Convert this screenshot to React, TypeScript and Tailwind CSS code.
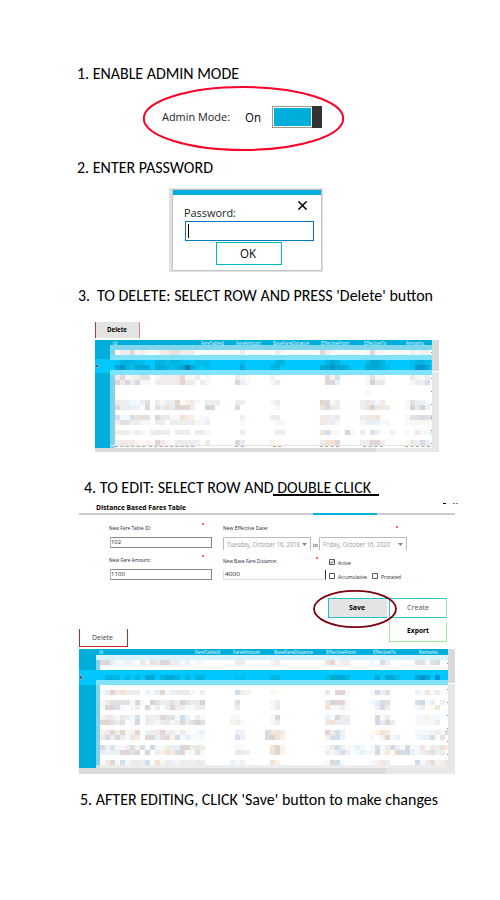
import { useLayoutEffect, useRef, useState } from "react";

/** One line of text stretched or squeezed to the width of its box. */
function Fit({ className, children }: { className: string; children: string }) {
  const outer = useRef<HTMLSpanElement>(null);
  const inner = useRef<HTMLSpanElement>(null);
  const [scale, setScale] = useState(1);
  useLayoutEffect(() => {
    if (outer.current && inner.current) {
      setScale(outer.current.clientWidth / inner.current.getBoundingClientRect().width);
    }
  }, []);
  return (
    <span ref={outer} className={`block shrink-0 whitespace-nowrap ${className}`}>
      <span ref={inner} className="inline-block origin-left" style={{ transform: `scaleX(${scale})` }}>
        {children}
      </span>
    </span>
  );
}

const heading = "h-5 text-[16px] leading-[22px] font-['Carlito','Lato',sans-serif]";

const palette: Record<string, string> = {
  a: "#f7f7f7", b: "#ededee", c: "#e1e1e1", d: "#d4d5d6",
  p: "#f3e9e6", P: "#e2d5d4", o: "#fcf1e6", O: "#f4e2d3",
  u: "#eaf0f8", U: "#d1dfec", v: "#edebf2", V: "#d8d7e2",
  g: "#f3fbf2", t: "#f0faff", n: "#ece9e2", y: "#fffaf0",
  "1": "#00bdec", "2": "#00b4e0", "3": "#00a8d6", "4": "#0095d0", "5": "#0078aa", "6": "#00b0c0",
};

type Segment = [number, string];

/** A strip of 5px blurred-out cells; each segment starts at a column index. */
function Strip({ segments, className = "" }: { segments: Segment[]; className?: string }) {
  const cells: string[] = Array(70).fill(".");
  segments.forEach(([start, s]) => s.split("").forEach((c, i) => (cells[start + i] = c)));
  return (
    <div className={`flex h-[5px] w-full shrink-0 overflow-hidden ${className}`}>
      {cells.map((c, i) => (
        <i key={i} className="h-full w-[5px] shrink-0" style={{ backgroundColor: palette[c] }} />
      ))}
    </div>
  );
}

function Marks({ className }: { className: string }) {
  return (
    <div className={`flex flex-col ${className}`}>
      {[0, 1, 2, 3, 4, 5, 6, 7].map((i) => (
        <i key={i} className="mb-[12px] h-px w-px bg-[#8c8c9c]" />
      ))}
    </div>
  );
}

const th = "h-[5px] text-[5px] leading-[7px] text-[#e8fbff]";

function FirstTable() {
  return (
    <div className="relative ml-[95px] h-[112px] w-[344px] overflow-hidden bg-white">
      <div className="flex h-[108px]">
        <div className="flex w-[15px] flex-col bg-[#00aedb]">
          <div className="mt-[19px] flex h-[14px] items-center bg-[#00c8ff] pl-px">
            <svg className="h-[4px] w-[3px]" viewBox="0 0 3 4"><path d="M0 0L3 2L0 4Z" fill="#334" stroke="#dff" strokeWidth=".4" /></svg>
          </div>
        </div>
        <div className="relative w-[322px] overflow-hidden">
          <div className="absolute inset-y-0 left-0 w-[5px] bg-[#80d3eb]" />
          <div className="relative flex h-[108px] flex-col">
            <div className="flex h-[5px] shrink-0 overflow-hidden bg-[#00aedb]">
              <Fit className={`${th} ml-[3px] w-[4px]`}>Id</Fit>
              <Fit className={`${th} ml-[84px] w-[23px]`}>FareTableId</Fit>
              <Fit className={`${th} ml-[12px] w-[25px]`}>FareAmount</Fit>
              <Fit className={`${th} ml-[12px] w-[36px]`}>BaseFareDistance</Fit>
              <Fit className={`${th} ml-[12px] w-[28px]`}>EffectiveFrom</Fit>
              <Fit className={`${th} ml-[15px] w-[22px]`}>EffectiveTo</Fit>
              <Fit className={`${th} ml-[20px] w-[18px]`}>Remarks</Fit>
            </div>
            <div className="h-[5px] shrink-0 bg-[#80d7eb]" />
            <Strip segments={[[2, "bpPaba.appccbpb"], [26, "b"], [33, "ba"], [42, "Pba"], [51, "aPaa"], [60, "babb"]]} />
            <div className="h-[5px] shrink-0 bg-[#80e3f8]" />
            <Strip className="bg-[#00c8ff]" segments={[[2, "22211..2212211.111"], [26, "1"], [33, "22"], [43, "232"], [51, "1332"], [60, "1221"]]} />
            <Strip className="bg-[#00c8ff]" segments={[[1, "3421333.332123531.1"], [26, "3"], [32, "22"], [42, "334332"], [51, "33321"], [60, "1443"]]} />
            <div className="h-[5px] shrink-0 bg-[#80e4ff]" />
            <Strip segments={[[1, "bPaobcc.appvpPaab.a"], [25, "bay"], [32, "o"], [43, "VoU"], [51, "acaa"], [60, "nggb"]]} />
            <Strip segments={[[1, "PbVbVat.bbpbpPpb.ba"], [25, "Vua"], [32, "ab"], [43, "PVu"], [51, "tdnn"], [60, "abuU"]]} />
            <Strip segments={[]} />
            <Strip segments={[[51, "a"]]} />
            <Strip segments={[]} />
            <Strip segments={[[1, "pbuttbc.baubPyopa.bbb"], [25, "bb"], [32, "ab"], [42, "PVgb"], [50, "bnbtp"], [59, "gcuut"]]} />
            <Strip segments={[[1, "Vbvuu.P.cuOvPPPb..dP"], [25, "U"], [33, "a"], [42, "OVnb"], [50, "uOdnnp"], [59, "gdndu"]]} />
            <Strip segments={[]} />
            <Strip segments={[[1, "UttUOcc.VnnatOpo.ta"], [26, "u"], [32, "pp"], [42, "ppun"], [50, "pppO"], [59, "gccUcP"]]} />
            <Strip segments={[[1, "bccbbaa.bb.bbbbbaab"], [26, "a"], [33, "aa"], [42, "nbba"], [50, "abuuta"], [59, "gaaaa"]]} />
            <Strip segments={[]} />
            <Strip segments={[[1, "bpbaba.pnbb.bbb.pva"], [26, "b"], [33, "bb"], [42, "OUay.dt"], [50, "v.cu..u"], [59, "g.ngtb"]]} />
            <Strip segments={[]} />
            <Strip segments={[[1, "upppayo.Ppa.pbbvu.p"], [25, "Vv"], [32, "oy"], [42, "vOOP"], [50, "bpVPp"], [59, "gnuVu"]]} />
            <div className="h-px shrink-0 bg-[#e4e4e0]" />
            <div className="flex h-[2px] shrink-0 items-start pl-[5px]">
              <i className="h-px w-[30px] border-t border-dashed border-[#aaa]" />
              <i className="ml-[4px] h-px w-[45px] border-t border-dashed border-[#aaa]" />
              <i className="ml-[41px] h-px w-[9px] border-t border-dashed border-[#aaa]" />
              <i className="ml-[29px] h-px w-[8px] border-t border-dashed border-[#aaa]" />
              <i className="ml-[39px] h-px w-[19px] border-t border-dashed border-[#aaa]" />
              <i className="ml-[24px] h-px w-[20px] border-t border-dashed border-[#aaa]" />
              <i className="ml-[22px] h-px w-[25px] border-t border-dashed border-[#aaa]" />
            </div>
          </div>
          <Marks className="absolute right-0 top-[12px]" />
        </div>
        <div className="flex w-[7px] flex-col bg-[#e8e8e8]">
          <div className="h-[32px] border-b border-white bg-[#dadada]" />
        </div>
      </div>
      <div className="flex h-[4px] bg-[#e8e8e8]"><div className="w-[281px] bg-[#dadada]" /></div>
    </div>
  );
}

function SecondTable() {
  return (
    <div className="relative ml-[79px] h-[125px] w-[376px] overflow-hidden bg-white">
      <div className="flex h-[119px]">
        <div className="flex w-[17px] flex-col bg-[#00aedb]">
          <div className="mt-[21px] flex h-[15px] items-center bg-[#00c8ff] pl-px">
            <svg className="h-[5px] w-[3px]" viewBox="0 0 3 5"><path d="M0 0L3 2.5L0 5Z" fill="#334" stroke="#dff" strokeWidth=".4" /></svg>
          </div>
        </div>
        <div className="relative w-[352px] overflow-hidden">
          <div className="absolute inset-y-0 left-0 w-[4px] bg-[#80d3eb]" />
          <div className="relative flex h-[119px] flex-col">
            <div className="flex h-[6px] shrink-0 overflow-hidden bg-[#00aedb]">
              <Fit className={`${th} ml-[3px] w-[4px]`}>Id</Fit>
              <Fit className={`${th} ml-[92px] w-[25px]`}>FareTableId</Fit>
              <Fit className={`${th} ml-[13px] w-[27px]`}>FareAmount</Fit>
              <Fit className={`${th} ml-[14px] w-[39px]`}>BaseFareDistance</Fit>
              <Fit className={`${th} ml-[13px] w-[30px]`}>EffectiveFrom</Fit>
              <Fit className={`${th} ml-[17px] w-[23px]`}>EffectiveTo</Fit>
              <Fit className={`${th} ml-[23px] w-[19px]`}>Remarks</Fit>
            </div>
            <div className="h-[5px] shrink-0 bg-[#d9f3fa]" />
            <Strip className="pl-[4px]" segments={[[0, "PVbtaut.nacnVPbvtu.at"], [27, "pp"], [34, "ab"], [45, "OPabb"], [54, "t.Uu"], [63, "cctcU"]]} />
            <Strip segments={[]} />
            <Strip className="bg-[#00c8ff]" segments={[]} />
            <Strip className="bg-[#00c8ff] pl-[4px]" segments={[[1, "222.2.2.33.2332.2.22"], [27, "11"], [34, "22"], [45, "16332"], [55, "3.331"], [63, "343.4"]]} />
            <div className="h-[5px] shrink-0 bg-[#80e3f9]" />
            <Strip segments={[]} />
            <Strip className="pl-[4px]" segments={[[0, "tbPpObub.utvPauvnba.b"], [27, "Ubo"], [34, "ay"], [45, "n.PPa"], [54, "tVuc"], [63, "utnyb"]]} />
            <Strip segments={[]} />
            <Strip className="pl-[4px]" segments={[[0, "apcccctPa.dcbbcbdcbnd"], [27, "c"], [34, "tb"], [45, "ndPPa"], [54, "tbUc"], [63, "Udtb.u"]]} />
            <Strip className="pl-[4px]" segments={[[0, "tPVct.tb.Vgb.uPpbatvb"], [27, "b"], [34, "av"], [45, "Oaaug"], [55, "uVb"], [63, "tuyyn"]]} />
            <Strip segments={[]} />
            <Strip className="pl-[4px]" segments={[[0, "opbtnugU.bubPcctUu.pa"], [26, "at"], [34, "tP"], [45, "utPvv"], [55, "Vyv"], [63, "taott"]]} />
            <Strip className="pl-[4px]" segments={[[0, "PPcpc.tV.puapnauPbcdc"], [26, "obt"], [34, "av"], [45, "nOvvv"], [55, "VvVb"], [63, "taaab"]]} />
            <Strip segments={[]} />
            <Strip className="pl-[4px]" segments={[[0, "ovPbPaoP.ubpPbbtpa.tu"], [27, "uu"], [33, "UOOp"], [45, "PpUu"], [54, "yoOp"], [63, "tttouaP"]]} />
            <Strip className="pl-[4px]" segments={[[0, "pVbVbtOb.PVucPoUtvtyt"], [27, "Uu"], [33, "VdOo"], [45, "oUUu"], [54, "a.oPtu"], [63, "tubUyc"]]} />
            <Strip segments={[]} />
            <Strip className="pl-[4px]" segments={[[0, "VucttpUoU.VtgbbuVPbnp"], [27, "ty"], [34, "OPo"], [45, "tpUuytut"], [54, "aUtpVugVt"], [63, "tngpuOp"]]} />
            <Strip className="pl-[4px]" segments={[[0, "uuuuPPcP.d.boOpUPytcg"], [27, "nbu"], [34, "OPo"], [45, "btbUv.tut"], [54, "aVapyPUVut"], [63, "tbncub"]]} />
            <Strip segments={[]} />
            <Strip className="pl-[4px]" segments={[[0, "apPtUtpnbUgOapuabbunb"], [26, "utu"], [34, "Oo"], [45, "tPUt"], [54, "tonb"], [63, "UtpcouO"]]} />
            <div className="h-[3px] shrink-0 bg-[#e8e8e8]/80" />
          </div>
          <Marks className="absolute right-0 top-[14px]" />
        </div>
        <div className="w-[7px] bg-[#e8e8e8]"><div className="h-[35px] border-b border-white bg-[#dadada]" /></div>
      </div>
      <div className="flex h-[6px] bg-[#e8e8e8]"><div className="w-[307px] bg-[#dadada]" /></div>
    </div>
  );
}

const small = "h-[8px] text-[5.6px] leading-[10px] text-[#222233]";
const value = "h-[8px] text-[6px] leading-[9px] text-[#222]";
const star = "size-[2px] rounded-full bg-[#ff3030]";

function Arrow() {
  return <svg className="mt-[5px] h-[3px] w-[5px]" viewBox="0 0 5 3"><path d="M0 0H5L2.5 3Z" fill="#888" /></svg>;
}

function Check({ checked, label, width }: { checked?: boolean; label: string; width: string }) {
  return (
    <div className="flex">
      <svg className="mt-px h-[6px] w-[6px] shrink-0" viewBox="0 0 6 6" fill="none" stroke="#333" strokeWidth=".8">
        <path d="M.5 .5H5.5V5.5H.5Z" />
        {checked && <path d="M1.3 3L2.6 4.3L5 1.5" />}
      </svg>
      <Fit className={`${small} ml-[3px] ${width}`}>{label}</Fit>
    </div>
  );
}

export default function App() {
  return (
    <main className="flex h-[900px] w-[500px] flex-col overflow-hidden bg-white pt-[63px] font-['Open_Sans',sans-serif] text-black">
      <h2><Fit className={`${heading} ml-[77px] w-[162px]`}>1. ENABLE ADMIN MODE</Fit></h2>

      <section className="relative flex h-[74px] shrink-0 pl-[162px]">
        <Fit className="mt-[24px] h-5 w-[68px] text-[11.4px] leading-5 text-[#222]">Admin Mode:</Fit>
        <Fit className="ml-[15px] mt-[25px] h-5 w-[16px] text-[12px] leading-5">On</Fit>
        <div className="ml-[11px] mt-[23px] flex h-[22px] w-[50px]">
          <div className="w-[40px] border border-r-0 border-[#999] p-px"><div className="h-full bg-[#00aedb]" /></div>
          <div className="w-[10px] bg-[#333]" />
        </div>
        <svg className="absolute left-[142px] top-[2px] h-[67px] w-[203px]" viewBox="0 0 203 67" fill="none">
          <ellipse cx="101.5" cy="33.5" rx="99.7" ry="31.5" stroke="#fb0026" strokeWidth="2" />
        </svg>
      </section>

      <h2><Fit className={`${heading} ml-[77px] w-[136px]`}>2. ENTER PASSWORD</Fit></h2>

      <section className="ml-[169px] mt-[11px] h-[84px] w-[154px] shrink-0 bg-[#e0e0e0] pb-px pl-[3px] pr-px pt-px">
        <div className="h-[82px] border border-[#c4c4c4] bg-white">
          <div className="h-[5px] bg-[#00aedb]" />
          <div className="flex h-[26px]">
            <Fit className="ml-[11px] mt-[8px] h-5 w-[52px] text-[11px] leading-5 text-[#222]">Password:</Fit>
            <svg className="ml-[62px] mt-[6px] h-[9px] w-[9px]" viewBox="0 0 9 9" stroke="#000" strokeWidth="1.5"><path d="M.4 .4L8.6 8.6M8.6 .4L.4 8.6" /></svg>
          </div>
          <div className="ml-[12px] h-[20px] w-[129px] border border-[#0078c8] pl-[2px] pt-[2px]"><div className="h-[14px] w-px bg-black" /></div>
          <div className="ml-[43px] mt-px flex h-[23px] w-[66px] border border-[#00bdbd] pl-[23px]">
            <Fit className="h-[21px] w-[16px] text-[12px] leading-[22px]">OK</Fit>
          </div>
        </div>
      </section>

      <h2 className="mt-[13px] flex">
        <Fit className={`${heading} ml-[78px] w-[12px]`}>3.</Fit>
        <Fit className={`${heading} ml-[7px] w-[336px]`}>TO DELETE: SELECT ROW AND PRESS 'Delete' button</Fit>
      </h2>

      <div className="ml-[95px] mt-[17px] flex h-[16px] w-[45px] shrink-0 border-l border-r border-l-[#cc3030] border-r-[#df8080] bg-[#e4e4e4] pl-[11px]">
        <Fit className="h-[16px] w-[20px] text-[6.4px] font-bold leading-[16px]">Delete</Fit>
      </div>
      <div className="mt-[2px] shrink-0"><FirstTable /></div>

      <h2 className="relative mt-[25px] flex">
        <Fit className={`${heading} ml-[84px] w-[287px]`}>4. TO EDIT: SELECT ROW AND DOUBLE CLICK</Fit>
        <i className="absolute left-[273px] top-[17px] h-[2px] w-[106px] bg-black" />
      </h2>

      <div className="ml-[79px] flex h-[16px] w-[385px] shrink-0">
        <Fit className="ml-[17px] mt-[5px] h-[10px] w-[90px] text-[7.2px] font-bold leading-[10px]">Distance Based Fares Table</Fit>
        <i className="ml-[257px] mt-[6px] h-px w-[3px] bg-black" />
        <i className="ml-[7px] mt-[6px] h-px w-[2px] bg-[#777]" />
        <i className="ml-px mt-[6px] h-px w-[2px] bg-[#888]" />
      </div>
      <div className="ml-[79px] flex h-[2px] w-[376px] shrink-0 bg-[#ccc]"><div className="ml-[234px] w-[64px] bg-[#00b4e0]" /></div>

      <section className="ml-[109px] flex h-[65px] shrink-0 overflow-hidden">
        <div className="w-[103px]">
          <div className="flex h-[22px] justify-between pr-[8px]">
            <Fit className={`${small} mt-[8px] w-[42px]`}>New Fare Table ID:</Fit><i className={`${star} mt-[8px]`} />
          </div>
          <div className="ml-px h-[11px] border border-[#888] border-l-[#bbb]"><Fit className={`${value} w-[10px]`}>102</Fit></div>
          <div className="flex h-[21px] justify-between pr-[8px]">
            <Fit className={`${small} mt-[7px] w-[42px]`}>New Fare Amount:</Fit><i className={`${star} mt-[7px]`} />
          </div>
          <div className="ml-px h-[11px] border border-[#888] border-l-[#bbb]"><Fit className={`${value} w-[14px]`}>1100</Fit></div>
        </div>
        <div className="ml-[11px] w-[200px]">
          <div className="flex h-[22px]">
            <Fit className={`${small} mt-[8px] w-[45px]`}>New Effective Date:</Fit><i className={`${star} ml-[128px] mt-[11px]`} />
          </div>
          <div className="flex h-[13px]">
            <div className="flex w-[88px] border border-b-0 border-[#bbb] pl-[3px]">
              <Fit className="mr-[2px] mt-[2px] h-[9px] w-[73px] text-[6.5px] leading-[9px] text-[#999]">Tuesday, October 16, 2018</Fit><Arrow />
            </div>
            <Fit className={`${small} ml-[2px] mt-[3px] w-[5px]`}>to</Fit>
            <div className="ml-px flex w-[88px] border border-b-0 border-[#bbb] pl-[3px]">
              <Fit className="mr-[8px] mt-[2px] h-[9px] w-[67px] text-[6.5px] leading-[9px] text-[#999]">Friday, October 16, 2020</Fit><Arrow />
            </div>
          </div>
          <div className="flex">
            <div className="w-[103px]">
              <div className="flex h-[20px]">
                <Fit className={`${small} mt-[6px] w-[54px]`}>New Base Fare Distance:</Fit><i className={`${star} ml-[39px] mt-[7px]`} />
              </div>
              <div className="h-[10px] border-b border-l border-r border-[#ddd] border-r-[#333] pl-px"><Fit className={`${value} w-[15px]`}>4000</Fit></div>
            </div>
            <div className="ml-[3px] mt-[8px] flex flex-col gap-[6px]">
              <Check checked label="Active" width="w-[13px]" />
              <div className="flex gap-[5px]">
                <Check label="Accumulative" width="w-[29px]" />
                <Check label="Prorated" width="w-[20px]" />
              </div>
            </div>
          </div>
        </div>
      </section>

      <section className="relative ml-[79px] flex h-[69px] w-[376px] shrink-0 items-start justify-between">
        <div className="mt-[49px] flex h-[18px] w-[49px] border border-t-0 border-[#bf2828] pl-[12px]">
          <Fit className="h-[18px] w-[21px] text-[6.5px] leading-[17px] text-[#444]">Delete</Fit>
        </div>
        <div className="mr-[8px] grid grid-cols-[59px_58px] gap-x-[2px] gap-y-[4px] pt-[18px]">
          <div className="flex h-[20px] border-y border-l border-[#20c2c4] bg-[#e4e4e4] pl-[20px]">
            <Fit className="h-[18px] w-[16px] text-[6.5px] font-bold leading-[18px]">Save</Fit>
          </div>
          <div className="flex h-[20px] border border-[#30c8c8] border-r-[#80e4e0] pl-[17px]">
            <Fit className="h-[18px] w-[22px] text-[6.5px] leading-[18px] text-[#555]">Create</Fit>
          </div>
          <div className="col-start-2 flex h-[20px] border border-t-0 border-[#a0e8a0] pl-[17px]">
            <Fit className="h-[18px] w-[22px] text-[6.5px] font-bold leading-[18px]">Export</Fit>
          </div>
        </div>
        <svg className="absolute left-[233px] top-[9px] h-[40px] w-[86px]" viewBox="0 0 86 40" fill="none">
          <ellipse cx="43" cy="20" rx="41" ry="18.2" stroke="#7c0010" strokeWidth="1.8" />
        </svg>
      </section>
      <div className="shrink-0"><SecondTable /></div>

      <h2 className="mt-[15px]"><Fit className={`${heading} ml-[80px] w-[358px]`}>5. AFTER EDITING, CLICK 'Save' button to make changes</Fit></h2>
    </main>
  );
}
